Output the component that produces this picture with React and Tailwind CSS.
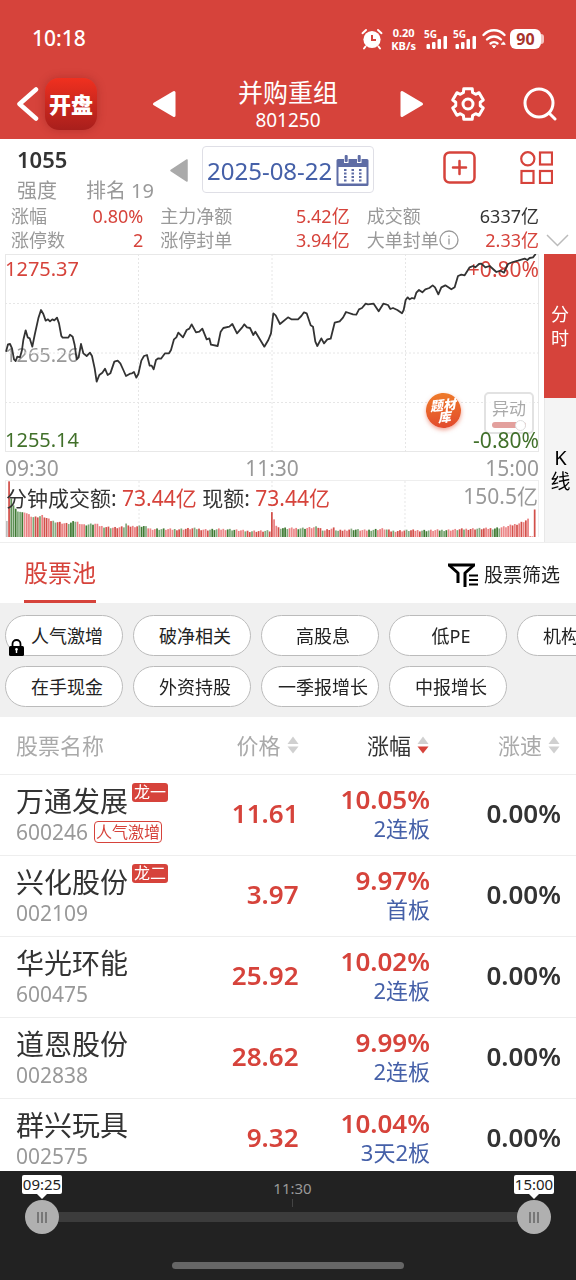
import { useState } from 'react';

const PRICE_LINE =
  '18,305 24,283 30,282 36,295 42,328 47,333 52,320 60,322 66,300 70,270 77,241 83,262 89,265 97,290 104,255 115,205 123,180 130,192 137,212 144,208 150,214 157,208 163,211 171,203 177,220 184,258 188,263 205,263 210,254 218,260 224,285 230,328 236,322 243,282 250,310 260,318 270,308 276,318 284,355 290,395 298,375 307,368 315,356 323,375 331,370 343,335 353,332 361,340 370,360 378,378 390,371 396,370 402,366 409,383 415,372 424,332 432,318 441,315 449,347 455,347 461,358 468,330 475,325 483,326 495,310 507,310 513,300 522,268 529,262 535,248 549,262 560,240 568,236 575,223 588,247 598,245 607,236 620,268 628,265 633,284 653,288 662,245 670,234 688,230 697,222 711,250 726,233 733,223 741,232 750,234 760,255 766,245 775,260 793,290 805,270 813,250 820,190 827,196 840,222 864,202 874,208 894,208 904,198 912,187 920,190 932,226 939,230 946,275 952,288 964,265 972,280 982,268 992,266 1004,218 1019,214 1029,203 1038,186 1059,193 1069,194 1077,178 1086,174 1097,161 1104,163 1121,161 1136,184 1150,161 1164,165 1171,177 1179,174 1192,180 1206,190 1211,180 1217,150 1223,142 1229,148 1236,144 1243,146 1249,128 1257,120 1267,127 1276,118 1288,114 1298,106 1305,112 1315,133 1324,112 1336,106 1354,118 1364,112 1374,78 1384,74 1394,76 1409,52 1419,48 1426,52 1437,42 1444,41 1456,52 1469,48 1489,66 1502,62 1512,68 1524,42 1539,36 1554,32 1574,26 1582,30 1589,24 1599,22 1607,12';

const VOLUME_SHAPE = [
  [15, 52], [21, 52], [22, 170], [28, 170], [32, 106], [50, 78], [75, 74], [100, 60], [125, 65], [150, 50],
  [200, 40], [225, 48], [250, 37], [285, 40], [300, 33], [340, 28], [370, 30], [380, 44], [388, 32], [430, 33],
  [450, 25], [520, 23], [580, 26], [620, 22], [680, 24], [740, 18], [813, 18], [814, 76], [820, 76], [825, 40],
  [835, 28], [864, 26], [914, 27], [954, 30], [974, 20], [1002, 27], [1014, 18], [1054, 24], [1094, 20],
  [1154, 25], [1174, 18], [1224, 20], [1294, 20], [1364, 22], [1414, 25], [1484, 26], [1524, 32], [1564, 43],
  [1588, 54], [1590, 2], [1602, 2], [1604, 84], [1612, 84],
];

function volumeAt(x) {
  for (let i = 1; i < VOLUME_SHAPE.length; i++) {
    const [x1, h1] = VOLUME_SHAPE[i];
    const [x0, h0] = VOLUME_SHAPE[i - 1];
    if (x <= x1) return h0 + ((h1 - h0) * (x - x0)) / (x1 - x0);
  }
  return 0;
}

const BAR_COLORS = ['#ea7f80', '#d2504a', '#ec8a8b', '#85aa80', '#ea7f80', '#3f7a33', '#d2504a', '#79a673'];
const BARS = Array.from({ length: 240 }, (_, i) => {
  const x = 15 + i * 6.65;
  const base = volumeAt(x + 3);
  const noise = ((i * 37) % 11) - 5;
  const height = base > 70 || base < 5 ? base : base + noise * 0.6;
  let color = BAR_COLORS[(i * i * 7 + i * 3 + (i >> 2)) % 8];
  if (i === 0) color = '#bdbdbd';
  if (i === 1 || i >= 228) color = i % 2 ? '#d2504a' : '#ea7f80';
  if (i === 2 || i === 3) color = '#5f9156';
  return { x, height, color };
});

const GEAR_PATH = (() => {
  const pts = [];
  for (let k = 0; k < 6; k++) {
    const mid = (k * Math.PI) / 3 - Math.PI / 2;
    [[-0.38, 12.4], [-0.27, 15.8], [0.27, 15.8], [0.38, 12.4]].forEach(([d, r]) => {
      pts.push(`${(18 + r * Math.cos(mid + d)).toFixed(2)} ${(18 + r * Math.sin(mid + d)).toFixed(2)}`);
    });
  }
  return `M${pts.join('L')}Z`;
})();

const STATS = [
  ['涨幅', '0.80%', true],
  ['主力净额', '5.42亿', true],
  ['成交额', '6337亿', false],
  ['涨停数', '2', true],
  ['涨停封单', '3.94亿', true],
  ['大单封单', '2.33亿', true],
];

const FILTERS = [
  ['人气激增', '破净相关', '高股息', '低PE', '机构增持'],
  ['在手现金', '外资持股', '一季报增长', '中报增长'],
];

const STOCKS = [
  { name: '万通发展', code: '600246', badge: '龙一', tag: '人气激增', price: '11.61', change: '10.05%', streak: '2连板' },
  { name: '兴化股份', code: '002109', badge: '龙二', price: '3.97', change: '9.97%', streak: '首板' },
  { name: '华光环能', code: '600475', price: '25.92', change: '10.02%', streak: '2连板' },
  { name: '道恩股份', code: '002838', price: '28.62', change: '9.99%', streak: '2连板' },
  { name: '群兴玩具', code: '002575', price: '9.32', change: '10.04%', streak: '3天2板' },
];

function StatusBar() {
  return (
    <div className="flex h-[72px] items-center justify-between pr-8 pl-8 pt-1.5 text-white">
      <span className="text-[21px] font-medium">10:18</span>
      <div className="flex items-center gap-2">
        <svg width="22" height="22" viewBox="0 0 22 22" fill="none" stroke="#fff" strokeWidth="2" strokeLinecap="round">
          <circle cx="11" cy="11.5" r="8.6" fill="#fff" stroke="none" />
          <path d="M1.5 5.2 5 2M20.5 5.2 17 2M4.5 18.5 3 20.5M17.5 18.5 19 20.5" />
          <path d="M11 7v5h4" stroke="#d6433b" strokeLinecap="butt" />
        </svg>
        <div className="text-center text-[11px] leading-[13px] font-bold">
          <div>0.20</div>
          <div>KB/s</div>
        </div>
        {[0, 1].map((n) => (
          <div key={n} className="-mr-1 flex flex-col">
            <span className="text-[10px] leading-[9px] font-bold">5G</span>
            <svg width="25" height="14" viewBox="0 0 24 14" className="-mt-1" fill="#fff">
              <rect x="2" y="9" width="3.5" height="5" rx="1" />
              <rect x="7.5" y="7" width="3.5" height="7" rx="1" />
              <rect x="13" y="4" width="3.5" height="10" rx="1" />
              <rect x="19" y="1" width="3.5" height="13" rx="1" />
            </svg>
          </div>
        ))}
        <svg width="24" height="20" viewBox="0 0 24 20" fill="none" stroke="#fff" strokeWidth="2.4" strokeLinecap="round">
          <path d="M1.5 6C7.500-.3 16.500-.3 22.500 6" />
          <path d="M5 10.500c4-4 10-4 14 0" />
          <path d="M8.500 14.500c2-1.800 5-1.800 7 0" />
          <path d="m10.500 17 1.500 2 1.500-2z" fill="#fff" strokeWidth="1" />
          <path d="m19.500 15 2-2 1.500 2z" fill="#fff" strokeWidth="1" />
        </svg>
        <div className="-ml-1 flex items-center">
          <span className="flex h-5 w-[31px] items-center justify-center rounded-[6px] bg-white text-base leading-5 font-bold text-[#a8332c]">90</span>
          <span className="h-2.5 w-[3px] rounded-r-full bg-[#f3c3c0]" />
        </div>
      </div>
    </div>
  );
}

function Header() {
  return (
    <div className="grid h-[67px] grid-cols-[1fr_272px_1fr] items-center pb-1 text-white">
      <div className="flex items-center gap-1.5 pl-4">
        <button type="button" aria-label="返回">
          <svg width="23" height="36" viewBox="0 0 23 36" fill="none" stroke="#fff" strokeWidth="4.5" strokeLinecap="round" strokeLinejoin="round">
            <path d="M20 3.500 3.500 18 20 32.500" />
          </svg>
        </button>
        <a href="#" className="flex size-[52px] items-center justify-center rounded-[14px] bg-linear-to-b from-[#f0301f] to-[#a81f1c] text-[22px] leading-none font-black shadow-[0_0_8px_rgba(120,20,20,0.35)]">
          开盘
        </a>
      </div>
      <div className="flex items-center justify-between">
        <button type="button" aria-label="上一个">
          <svg width="24" height="28" viewBox="0 0 24 28" fill="#fff" stroke="#fff" strokeWidth="3" strokeLinejoin="round">
            <path d="M22 2.500v23L2.500 14z" />
          </svg>
        </button>
        <h1 className="pt-0.5 text-center text-[25px] leading-[30px]">
          并购重组
          <span className="block text-[19px] leading-[26px]">801250</span>
        </h1>
        <button type="button" aria-label="下一个">
          <svg width="24" height="28" viewBox="0 0 24 28" fill="#fff" stroke="#fff" strokeWidth="3" strokeLinejoin="round">
            <path d="M2 2.500v23L21.500 14z" />
          </svg>
        </button>
      </div>
      <div className="flex items-center justify-end gap-[37px] pr-[19px]">
        <button type="button" aria-label="设置">
          <svg width="36" height="36" viewBox="0 0 36 36" fill="none" stroke="#fff" strokeWidth="3" strokeLinejoin="round">
            <path d={GEAR_PATH} />
            <circle cx="18" cy="18" r="5" />
          </svg>
        </button>
        <button type="button" aria-label="搜索">
          <svg width="34" height="34" viewBox="0 0 34 34" fill="none" stroke="#fff" strokeWidth="3" strokeLinecap="round">
            <circle cx="16" cy="16" r="14" />
            <path d="m26.500 26.500 5.500 5.500" />
          </svg>
        </button>
      </div>
    </div>
  );
}

function InfoRow() {
  return (
    <div className="flex h-[65px] pr-[23px] pl-[17px]">
      <div className="w-[153px] pt-1">
        <div className="text-[22px] leading-8 font-semibold text-[#333]">1055</div>
        <div className="flex justify-between pr-4 text-xl leading-8 text-[#999]">
          <span>强度</span>
          <span>排名 19</span>
        </div>
      </div>
      <button type="button" aria-label="前一天" className="mr-3.5 self-start pt-5">
        <svg width="18" height="23" viewBox="0 0 18 23" fill="#aaa" stroke="#aaa" strokeWidth="1.5" strokeLinejoin="round">
          <path d="M17 1v21L1 11.500z" />
        </svg>
      </button>
      <button type="button" className="mt-[7px] flex h-[47px] items-center gap-1 rounded-[4px] border border-[#dfdfe6] px-1 pt-0.5 text-2xl whitespace-nowrap text-[#4560a8]">
        2025-08-22
        <svg width="33" height="31" viewBox="0 0 33 31" fill="#5e6ca5">
          <path d="M2 4h29a1.500 1.500 0 0 1 1.500 1.500v24A1.500 1.500 0 0 1 31 31H2a1.500 1.500 0 0 1-1.500-1.500v-24A1.500 1.500 0 0 1 2 4z" />
          <path d="M2.500 12h28v16.500h-28z" fill="#fff" />
          <path d="M8 2h4.500v6H8zM21 2h4.500v6H21z" fill="#fff" />
          <rect x="8.700" y="0" width="3" height="7" rx="1" />
          <rect x="21.700" y="0" width="3" height="7" rx="1" />
          {[8, 15.5, 23].map((x) => [14, 17.5, 21, 24.5].map((y) => <rect key={`${x}-${y}`} x={x} y={y} width="2.5" height="2" />))}
        </svg>
      </button>
      <div className="ml-auto flex items-start gap-[44px] pt-3">
        <button type="button" aria-label="添加">
          <svg width="33" height="33" viewBox="0 0 33 33" fill="none" stroke="#d6433b" strokeWidth="2.5" strokeLinecap="round">
            <rect x="1.500" y="1.500" width="30" height="30" rx="5" />
            <path d="M10 16.500h13M16.500 10v13" />
          </svg>
        </button>
        <button type="button" aria-label="更多">
          <svg width="33" height="33" viewBox="0 0 33 33" fill="none" stroke="#d6433b" strokeWidth="2.2">
            <circle cx="7.800" cy="7.800" r="6.600" />
            <rect x="20" y="1.500" width="12" height="12" />
            <rect x="1.500" y="20" width="12" height="12" />
            <rect x="20" y="20" width="12" height="12" />
          </svg>
        </button>
      </div>
    </div>
  );
}

function Stats() {
  return (
    <div className="flex items-end pb-0.5 pl-[11px]">
      <dl className="grid flex-1 grid-cols-[132fr_189fr_172fr] gap-x-[17px] text-lg leading-6">
        {STATS.map(([label, value, red]) => (
          <div key={label} className="flex justify-between whitespace-nowrap">
            <dt className="flex items-center text-[#999]">
              {label}
              {label === '大单封单' && (
                <svg width="20" height="20" viewBox="0 0 20 20" fill="none" stroke="#999" strokeWidth="1.3">
                  <circle cx="10" cy="10" r="9" />
                  <path d="M10 8.500v6M10 5.500v1.500" />
                </svg>
              )}
            </dt>
            <dd className={red ? 'text-[#d6433b]' : 'text-[#333]'}>{value}</dd>
          </div>
        ))}
      </dl>
      <button type="button" aria-label="展开" className="flex h-6 w-[37px] items-center justify-center">
        <svg width="23" height="13" viewBox="0 0 23 13" fill="none" stroke="#bbb" strokeWidth="1.5">
          <path d="m1 1 10.500 10.500L22 1" />
        </svg>
      </button>
    </div>
  );
}

function Chart() {
  return (
    <section className="flex border-b border-[#eee] text-[21px] leading-7">
      <div className="min-w-0 flex-1 pr-[5px] pb-[5px] pl-[5px]">
        <div className="relative h-[198px]">
          <span className="absolute top-px left-0 text-xl leading-7 text-[#d6433b]">1275.37</span>
          <span className="absolute top-px right-0 text-[#d6433b]">+0.80%</span>
          <span className="absolute top-[87px] left-0 text-xl leading-7 text-[#999]">1265.26</span>
          <svg className="absolute inset-0 h-full w-full" viewBox="15 12 1602 594" preserveAspectRatio="none" fill="none">
            <g stroke="#e6e6e6" strokeWidth="1">
              <rect x="15" y="12" width="1602" height="594" stroke="#e8e8e8" strokeWidth="2" vectorEffect="non-scaling-stroke" />
              {[0.25, 0.5, 0.75].map((f) => (
                <g key={f} strokeDasharray="2 2">
                  <path d={`M${15 + 1602 * f} 12V606`} vectorEffect="non-scaling-stroke" />
                  <path d={`M15 ${12 + 594 * f}H1617`} vectorEffect="non-scaling-stroke" />
                </g>
              ))}
            </g>
            <polyline points={PRICE_LINE} stroke="#333" strokeWidth="1.8" strokeLinejoin="round" vectorEffect="non-scaling-stroke" />
          </svg>
          <button type="button" className="absolute right-[78px] bottom-6 flex size-[35px] -rotate-6 flex-col items-center justify-center rounded-full bg-linear-to-b from-[#ee7a2a] to-[#e2492c] text-[13px] leading-3 font-black text-white italic shadow-[0_2px_4px_rgba(226,73,44,0.5)]">
            <span>题材</span>
            <span>库</span>
          </button>
          <button type="button" role="switch" aria-checked="true" className="absolute right-[5px] bottom-[18px] flex h-[42px] w-[50px] flex-col items-center rounded-[5px] border-2 border-[#e2e2e2] bg-white/70 pt-0.5 text-[17px] leading-[26px] text-[#aaa]">
            异动
            <span className="flex h-1.5 w-[34px] shrink-0 items-center justify-end rounded-full bg-[#e3a09d]">
              <span className="size-[11px] rounded-full border border-[#ddd] bg-white" />
            </span>
          </button>
          <span className="absolute bottom-[-2px] left-0 text-xl leading-7 text-[#41702a]">1255.14</span>
          <span className="absolute right-0 bottom-[-2px] text-[#41702a]">-0.80%</span>
        </div>
        <div className="flex h-7 items-center justify-between pt-1 text-[#999]">
          <span>09:30</span>
          <span>11:30</span>
          <span>15:00</span>
        </div>
        <div className="relative h-[57px] border-x border-t border-[#eee]">
          <svg className="h-full w-full" viewBox="15 0 1602 171" preserveAspectRatio="none">
            <g stroke="#e6e6e6" strokeDasharray="2 2">
              {[0.25, 0.5, 0.75].map((f) => (
                <path key={f} d={`M${15 + 1602 * f} 0V171`} vectorEffect="non-scaling-stroke" />
              ))}
            </g>
            {BARS.map((b) => (
              <rect key={b.x} x={b.x} y={171 - b.height} width="5.2" height={b.height} fill={b.color} />
            ))}
          </svg>
          <p className="absolute top-[3px] left-0 whitespace-pre text-[#333]">
            分钟成交额: <span className="text-[#d6433b]">73.44亿</span> 现额: <span className="text-[#d6433b]">73.44亿</span>
          </p>
          <span className="absolute top-px right-0 text-[#999]">150.5亿</span>
        </div>
      </div>
      <div className="flex w-8 flex-col text-lg leading-6">
        <button type="button" className="flex flex-1 flex-col items-center justify-center bg-[#d6433b] text-white">
          <span>分</span>
          <span>时</span>
        </button>
        <button type="button" className="flex flex-1 flex-col items-center justify-center border-l border-[#e8e8e8] bg-[#f4f4f4] text-xl leading-6 text-black">
          <span>K</span>
          <span>线</span>
        </button>
      </div>
    </section>
  );
}

function PoolTabs() {
  return (
    <div className="flex h-[60px] items-stretch justify-between pr-4 pl-6">
      <button type="button" className="border-b-[3px] border-[#d6433b] pt-0.5 text-2xl text-[#d6433b]">股票池</button>
      <button type="button" className="flex items-center gap-[5px] pt-1 text-[19px] text-[#222]">
        <svg width="32" height="24" viewBox="0 0 32 24" fill="none" stroke="#000" strokeWidth="3">
          <path d="M1 2h27" />
          <path d="M2.500 2.500 11 10v10M26.500 2.500 18 10v14" strokeLinejoin="round" />
          <path d="M22 12.500h9M22 17h9M22 21.500h9" strokeWidth="2" />
        </svg>
        股票筛选
      </button>
    </div>
  );
}

function Filters() {
  return (
    <div className="flex flex-col gap-2.5 overflow-x-auto bg-[#f0f0f0] pt-3 pb-2.5 pl-[5px] [scrollbar-width:none]">
      {FILTERS.map((row, r) => (
        <div key={r} className="flex gap-2.5">
          {row.map((label, i) => (
            <button key={label} type="button" className="relative h-[41px] w-[118px] shrink-0 rounded-full border border-[#bbb] bg-white pl-1.5 text-[18px] leading-6 whitespace-nowrap text-[#222]">
              {label}
              {r === 0 && i === 0 && (
                <svg className="absolute bottom-[-1px] left-[3px]" width="15" height="17" viewBox="0 0 15 17">
                  <path d="M3.500 8V5a4 4 0 0 1 8 0v3" fill="none" stroke="#000" strokeWidth="1.8" />
                  <rect x="0" y="7" width="15" height="10" rx="1.5" fill="#000" />
                  <path d="M7.500 9a1.400 1.400 0 0 1 .7 2.600V14H6.800v-2.400A1.400 1.400 0 0 1 7.500 9z" fill="#fff" />
                </svg>
              )}
            </button>
          ))}
        </div>
      ))}
    </div>
  );
}

function SortHead({ label, active }) {
  return (
    <button type="button" className={active ? 'inline-flex items-center gap-1.5 text-[#333]' : 'inline-flex items-center gap-1.5 text-[#aaa]'}>
      {label}
      <svg width="12" height="18" viewBox="0 0 12 18">
        <path d="M6 .5 11.500 8H.5z" fill="#d0d0d0" />
        <path d="M6 17.500.5 10.500h11z" fill={active ? '#d6433b' : '#d0d0d0'} />
      </svg>
    </button>
  );
}

function StockTable() {
  return (
    <table className="w-full table-fixed border-collapse">
      <colgroup>
        <col className="w-[36%]" />
        <col className="w-[16%]" />
        <col className="w-[23%]" />
        <col className="w-[25%]" />
      </colgroup>
      <thead>
        <tr className="h-[57px] border-b border-[#eee] text-[22px] leading-8">
          <th className="pb-0 pl-4 text-left font-normal text-[#aaa]">股票名称</th>
          <th className="pr-px text-right font-normal whitespace-nowrap"><SortHead label="价格" /></th>
          <th className="pr-[3px] text-right font-normal whitespace-nowrap"><SortHead label="涨幅" active /></th>
          <th className="pr-4 text-right font-normal whitespace-nowrap"><SortHead label="涨速" /></th>
        </tr>
      </thead>
      <tbody>
        {STOCKS.map((s) => (
          <tr key={s.code} className="h-[81px] border-b border-[#eee] text-right text-[26px] leading-[30px] font-semibold">
            <td className="pb-px pl-4 text-left font-normal whitespace-nowrap">
              <div className="flex text-[28px] leading-9 text-[#333]">
                {s.name}
                {s.badge && <span className="ml-1 h-[19px] rounded-[3px] bg-[#d6433b] px-[2px] text-base leading-[18px] text-white">{s.badge}</span>}
              </div>
              <div className="flex items-center gap-1.5 text-[21px] leading-[26px] text-[#999]">
                {s.code}
                {s.tag && <span className="rounded-[4px] border border-[#d6433b] px-px text-base leading-5 text-[#d6433b]">{s.tag}</span>}
              </div>
            </td>
            <td className="pr-px pb-1 text-[#d6433b]">{s.price}</td>
            <td className="pr-0.5 pb-1 text-[#d6433b]">
              {s.change}
              <div className="text-[22px] leading-7 font-normal text-[#4560a8]">{s.streak}</div>
            </td>
            <td className="pr-[15px] pb-1 text-[#333]">0.00%</td>
          </tr>
        ))}
      </tbody>
    </table>
  );
}

const RANGE_CLASS =
  'pointer-events-none absolute inset-x-0 top-0 h-[34px] w-full appearance-none bg-transparent [&::-webkit-slider-thumb]:pointer-events-auto [&::-webkit-slider-thumb]:size-[34px] [&::-webkit-slider-thumb]:appearance-none [&::-webkit-slider-thumb]:rounded-full [&::-webkit-slider-thumb]:bg-[#b0b0b0] [&::-webkit-slider-thumb]:bg-[linear-gradient(90deg,#777_0_2px,transparent_2px_4px,#777_4px_6px,transparent_6px_8px,#777_8px_10px)] [&::-webkit-slider-thumb]:bg-[length:10px_11px] [&::-webkit-slider-thumb]:bg-center [&::-webkit-slider-thumb]:bg-no-repeat';

function Bubble({ children }) {
  return (
    <span className="flex w-10 flex-col items-center">
      <span className="w-10 rounded-[2px] bg-white text-center text-[15px] leading-[19px] text-[#222]">{children}</span>
      <svg width="10" height="5" viewBox="0 0 10 5" fill="#fff">
        <path d="M0 0h10L5 5z" />
      </svg>
    </span>
  );
}

function TimeRange() {
  const [start, setStart] = useState(0);
  const [end, setEnd] = useState(245);
  return (
    <footer className="flex h-[109px] shrink-0 flex-col bg-[#222] px-[25px] pt-1">
      <div className="-mx-[3px] flex items-start justify-between">
        <Bubble>09:25</Bubble>
        <span className="flex flex-col items-center pt-1 pl-[9px] text-[15px] leading-[19px] text-[#999]">
          11:30
          <span className="mt-px h-2 w-px bg-[#444]" />
        </span>
        <Bubble>15:00</Bubble>
      </div>
      <div className="relative -mt-[7px] flex h-[34px] items-center">
        <div className="mx-4 h-2.5 flex-1 bg-[#3c3c3c]" />
        <input type="range" aria-label="开始时间" min="0" max="245" value={start} onChange={(e) => setStart(Math.min(+e.target.value, end))} className={RANGE_CLASS} />
        <input type="range" aria-label="结束时间" min="0" max="245" value={end} onChange={(e) => setEnd(Math.max(+e.target.value, start))} className={RANGE_CLASS} />
      </div>
      <div className="mx-auto mt-7 h-[7px] w-[44%] rounded-full bg-[#666]" />
    </footer>
  );
}

export default function App() {
  return (
    <div className="flex h-screen flex-col overflow-hidden bg-white font-['Noto_Sans','Noto_Sans_CJK_SC',sans-serif]">
      <header className="shrink-0 bg-[#d6433b]">
        <StatusBar />
        <Header />
      </header>
      <main className="min-h-0 flex-1 overflow-x-hidden overflow-y-auto [scrollbar-width:none]">
        <InfoRow />
        <Stats />
        <Chart />
        <PoolTabs />
        <Filters />
        <StockTable />
      </main>
      <TimeRange />
    </div>
  );
}
